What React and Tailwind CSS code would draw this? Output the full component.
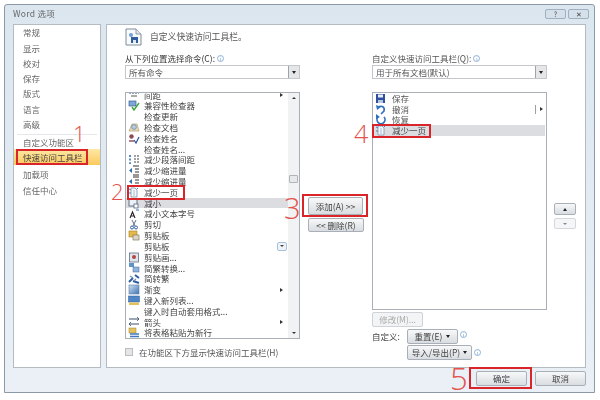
import React from "react";

// small hand drawn toolbar icons
function Doc() {
  return (
    <svg viewBox="0 0 12 11" className="w-3 h-[11px]">
      <path d="M3 1h4l2 2v7H3z" fill="#f4f8fc" stroke="#7f93a8" strokeWidth="0.8" />
      <path d="M1 2l2 1M1 6h2M10 1l-1 1" stroke="#3f86c4" strokeWidth="1" />
      <path d="M5 4h2M5 6h2M5 8h2" stroke="#8aa5bf" strokeWidth="0.7" />
    </svg>
  );
}

const icons = {
  spacing: (
    <svg viewBox="0 0 12 11" className="w-3 h-[11px]">
      <path d="M1 1h3M7 1h4M1 4h10" stroke="#2d4f7c" strokeWidth="1.2" strokeDasharray="2 1" />
      <path d="M3 7h6" stroke="#555" strokeWidth="1" />
    </svg>
  ),
  compat: (
    <svg viewBox="0 0 12 11" className="w-3 h-[11px]">
      <rect x="1" y="1" width="7" height="5" fill="#7da7d9" stroke="#3c5f95" strokeWidth="0.7" />
      <path d="M4 7l2 3 5-7" fill="none" stroke="#3da33d" strokeWidth="1.4" />
    </svg>
  ),
  inspect: (
    <svg viewBox="0 0 12 11" className="w-3 h-[11px]">
      <path d="M1 9l3-7h5l2 7z" fill="#e8dcb8" stroke="#b0a070" strokeWidth="0.7" />
      <circle cx="6" cy="5" r="2.4" fill="#b9cbe4" stroke="#6580a6" strokeWidth="0.7" />
    </svg>
  ),
  name: (
    <svg viewBox="0 0 12 11" className="w-3 h-[11px]">
      <circle cx="3.5" cy="3.5" r="2.2" fill="#8f4a58" />
      <path d="M1 8h5" stroke="#8f4a58" strokeWidth="1.4" />
      <path d="M6 7l2 3 3-6" fill="none" stroke="#2f4f9f" strokeWidth="1.2" />
    </svg>
  ),
  para: (
    <svg viewBox="0 0 12 11" className="w-3 h-[11px]">
      <path d="M2 1v9" stroke="#2f6fb5" strokeWidth="1.6" strokeDasharray="2 1.6" />
      <path d="M6 2h5M6 5h5M6 8h5" stroke="#444" strokeWidth="1.2" strokeDasharray="2 1" />
    </svg>
  ),
  indent: (
    <svg viewBox="0 0 12 11" className="w-3 h-[11px]">
      <path d="M5 1h6M7 4h4M7 7h4M5 10h6" stroke="#333" strokeWidth="1.1" />
      <path d="M4 3L1 5.5 4 8z" fill="#2f6fb5" />
    </svg>
  ),
  shrink: (
    <svg viewBox="0 0 12 11" className="w-3 h-[11px]">
      <rect x="1" y="1" width="8" height="7" fill="#eef2f7" stroke="#56677d" strokeWidth="0.9" />
      <rect x="6" y="6" width="4" height="4" fill="#fff" stroke="#56677d" strokeWidth="0.8" />
    </svg>
  ),
  font: (
    <svg viewBox="0 0 12 11" className="w-3 h-[11px]">
      <path d="M2 10l2.5-6L7 10M3 8h3" fill="none" stroke="#222" strokeWidth="1.1" />
      <path d="M8 2h3" stroke="#2f6fb5" strokeWidth="1" />
    </svg>
  ),
  cut: (
    <svg viewBox="0 0 12 11" className="w-3 h-[11px]">
      <path d="M4 1l3 6M8 1L5 7" stroke="#5f6f86" strokeWidth="1" />
      <circle cx="4" cy="8.5" r="1.5" fill="none" stroke="#2f5f9f" strokeWidth="1" />
      <circle cx="8" cy="8.5" r="1.5" fill="none" stroke="#2f5f9f" strokeWidth="1" />
    </svg>
  ),
  clip: (
    <svg viewBox="0 0 12 11" className="w-3 h-[11px]">
      <rect x="1" y="1" width="8" height="6" fill="#e6b94a" stroke="#a57f24" strokeWidth="0.6" />
      <rect x="5" y="5" width="6" height="5" fill="#d9d6cc" stroke="#7f6a4a" strokeWidth="0.6" />
    </svg>
  ),
  clipart: (
    <svg viewBox="0 0 12 11" className="w-3 h-[11px]">
      <rect x="1.5" y="1" width="9" height="9" fill="#dfe5ec" stroke="#5f6f86" strokeWidth="0.8" />
      <circle cx="6" cy="5" r="2" fill="#b6473e" />
    </svg>
  ),
  convert: (
    <svg viewBox="0 0 12 11" className="w-3 h-[11px]">
      <rect x="1" y="1" width="5" height="4" fill="#5f92c9" />
      <rect x="5" y="5" width="6" height="5" fill="#8fb3da" stroke="#3f6a9f" strokeWidth="0.5" />
    </svg>
  ),
  convert2: (
    <svg viewBox="0 0 12 11" className="w-3 h-[11px]">
      <path d="M1 9l4-4M7 2l4 3M5 8l6 2" stroke="#2f5f9f" strokeWidth="2" />
      <path d="M2 3l3 2M8 6l-2 2" stroke="#6f8fb8" strokeWidth="1.2" />
    </svg>
  ),
  gradient: (
    <svg viewBox="0 0 12 11" className="w-3 h-[11px]">
      <defs>
        <linearGradient id="grad" x1="0" y1="0" x2="1" y2="1">
          <stop offset="0" stopColor="#cfe0f3" />
          <stop offset="1" stopColor="#3f73b3" />
        </linearGradient>
      </defs>
      <rect x="1" y="1" width="10" height="9" fill="url(#grad)" stroke="#5f7ea3" strokeWidth="0.6" />
    </svg>
  ),
  newlist: (
    <svg viewBox="0 0 12 11" className="w-3 h-[11px]">
      <rect x="0.5" y="1" width="11" height="6" fill="#4f86c6" stroke="#2f5f9f" strokeWidth="0.5" />
      <rect x="1" y="7.5" width="10" height="2.5" fill="#e2c15a" />
    </svg>
  ),
  arrows: (
    <svg viewBox="0 0 12 11" className="w-3 h-[11px]">
      <path d="M1 3h10M1 8h10" stroke="#3a4f6a" strokeWidth="1" />
      <path d="M9 1l2 2-2 2M3 6L1 8l2 2" fill="none" stroke="#3a4f6a" strokeWidth="0.8" />
    </svg>
  ),
  paste: (
    <svg viewBox="0 0 12 11" className="w-3 h-[11px]">
      <rect x="1" y="1" width="7" height="5" fill="#e3c25f" stroke="#a57f24" strokeWidth="0.5" />
      <path d="M2 7h9M2 9.5h9" stroke="#3f78bb" strokeWidth="1.4" />
    </svg>
  ),
};

const commands = [
  { name: "间距", icon: "spacing", arrow: true },
  { name: "兼容性检查器", icon: "compat" },
  { name: "检查更新" },
  { name: "检查文档", icon: "inspect" },
  { name: "检查姓名", icon: "name" },
  { name: "检查姓名..." },
  { name: "减少段落间距", icon: "para" },
  { name: "减少缩进量", icon: "indent" },
  { name: "减少缩进量", icon: "indent" },
  { name: "减少一页", doc: true },
  { name: "减小", icon: "shrink", selected: true },
  { name: "减小文本字号", icon: "font" },
  { name: "剪切", icon: "cut" },
  { name: "剪贴板", icon: "clip" },
  { name: "剪贴板", dropdown: true },
  { name: "剪贴画...", icon: "clipart" },
  { name: "简繁转换...", icon: "convert" },
  { name: "简转繁", icon: "convert2" },
  { name: "渐变", icon: "gradient", arrow: true },
  { name: "键入新列表...", icon: "newlist" },
  { name: "键入时自动套用格式..." },
  { name: "箭头", icon: "arrows", arrow: true },
  { name: "将表格粘贴为新行", icon: "paste" },
];

const navItems = ["常规", "显示", "校对", "保存", "版式", "语言", "高级"];

function Info() {
  return (
    <span className="inline-flex items-center justify-center w-[7px] h-[7px] rounded-full border border-[#8fb3da] text-[5px] leading-none text-[#5f92c9]">
      i
    </span>
  );
}

function Select({ label }) {
  return (
    <div className="flex items-center h-[14px] mt-px border border-[#c3c7cc] bg-white">
      <span className="flex-1 pl-[3px] text-[8.5px] text-[#555]">{label}</span>
      <span className="flex items-center justify-center w-[11px] h-full bg-[#e4e6e8] border-l border-[#9fa4aa]">
        <span className="w-0 h-0 border-x-[2.5px] border-x-transparent border-t-[3px] border-t-[#222]" />
      </span>
    </div>
  );
}

function Button({ className, children }) {
  return (
    <div
      className={`flex items-center justify-center rounded-[2px] border border-[#a9afb6] bg-gradient-to-b from-[#f7f8f9] to-[#d9dde1] text-[8.5px] text-[#444] ${className}`}
    >
      {children}
    </div>
  );
}

function Mark({ className, children }) {
  return (
    <span
      className={`absolute font-['Open_Sans',sans-serif] font-light leading-none text-[#e4524c] ${className}`}
    >
      {children}
    </span>
  );
}

function Box({ className }) {
  return <div className={`absolute border-2 border-[#d9252a] ${className}`} />;
}

export default function App() {
  return (
    <div className="relative w-[600px] h-[400px] overflow-hidden bg-white pl-1 pt-1 font-['Noto_Sans_CJK_SC','Noto_Sans',sans-serif]">
      <div className="flex flex-col w-[591px] h-[389px] rounded-t-[3px] border border-[#8c99a6] bg-gradient-to-b from-[#dbe6ef] to-[#eaf0f6] blur-[0.4px]">
        {/* title bar */}
        <div className="flex items-start h-[19px] pl-2 pr-[5px] shrink-0">
          <span className="mt-[2px] text-[8.5px] tracking-[0.3px] text-[#666]">Word 选项</span>
          <div className="flex gap-[2px] ml-auto mt-[4px]">
            <div className="flex items-center justify-center w-[21px] h-[10px] rounded-[2px] border border-[#9fb0c0] bg-[#d5e0ea] text-[7px] leading-none text-[#444]">
              ?
            </div>
            <div className="flex items-center justify-center w-[21px] h-[10px] rounded-[2px] border border-[#9fb0c0] bg-[#d5e0ea] text-[7px] leading-none text-[#444]">
              ✕
            </div>
          </div>
        </div>

        {/* panels */}
        <div className="flex gap-[5px] h-[344px] pl-2 pr-2 shrink-0">
          <div className="w-[88px] bg-white border border-[#b5bbc2] shrink-0">
            {navItems.map((item) => (
              <div key={item} className="flex items-center h-[15.3px] pl-[9px] text-[8.5px] text-[#666]">
                {item}
              </div>
            ))}
            <div className="mx-[3px] mt-[2px] border-t border-[#e5e7ea]" />
            <div className="flex items-center h-[14px] pl-[9px] text-[8.5px] text-[#666]">自定义功能区</div>
            <div className="flex items-center h-[16px] pl-[9px] bg-gradient-to-b from-[#fde9a4] to-[#fbc95a] text-[8.5px] text-[#444]">
              快速访问工具栏
            </div>
            <div className="flex items-center h-[15.3px] mt-[2px] pl-[9px] text-[8.5px] text-[#666]">加载项</div>
            <div className="flex items-center h-[15.3px] pl-[9px] text-[8.5px] text-[#666]">信任中心</div>
          </div>

          <div className="flex-1 pl-[18px] bg-white border border-[#b5bbc2]">
            <div className="flex items-center gap-[8px] h-[18px] mt-[3px]">
              <svg viewBox="0 0 17 18" className="w-[17px] h-[18px]">
                <path d="M1 1h10l5 5v11H1z" fill="#f8fafc" stroke="#7f8b98" strokeWidth="1" />
                <path d="M11 1v5h5" fill="#e1e6eb" stroke="#7f8b98" strokeWidth="0.8" />
                <circle cx="6" cy="7" r="2" fill="#6fa0d2" />
                <rect x="6" y="9" width="7" height="6" fill="#2f5e9a" />
                <rect x="8" y="12" width="3" height="3" fill="#dfe8f2" />
              </svg>
              <span className="text-[8.8px] text-[#555]">自定义快速访问工具栏。</span>
            </div>

            <div className="flex mt-[6px]">
              {/* commands column */}
              <div className="w-[175px] shrink-0">
                <div className="flex items-center gap-[2px] h-3 text-[8.5px] text-[#333]">
                  从下列位置选择命令(C):
                  <Info />
                </div>
                <Select label="所有命令" />
                <div className="relative flex h-[247px] mt-[13px] border border-[#a9afb6] bg-white overflow-hidden">
                  <div className="flex-1 -mt-[3.5px]">
                    {commands.map((cmd, i) => (
                      <div
                        key={i}
                        className={`relative flex items-center h-[10.82px] pl-[2px] text-[8.5px] text-[#444] ${
                          cmd.selected ? "bg-[#dcdde0]" : ""
                        }`}
                      >
                        <span className="flex items-center w-4 shrink-0">
                          {cmd.doc ? <Doc /> : cmd.icon ? icons[cmd.icon] : null}
                        </span>
                        {cmd.name}
                        {cmd.arrow && (
                          <span className="absolute right-[5px] w-0 h-0 border-y-[2.5px] border-y-transparent border-l-[3px] border-l-[#333]" />
                        )}
                        {cmd.dropdown && (
                          <span className="absolute right-[1px] flex items-center justify-center w-[10px] h-[9px] rounded-[2px] border border-[#a8c0da] bg-[#eef3f9]">
                            <span className="w-0 h-0 border-x-[2px] border-x-transparent border-t-[2px] border-t-[#444]" />
                          </span>
                        )}
                      </div>
                    ))}
                  </div>
                  <div className="flex flex-col items-center w-[11px] shrink-0 bg-[#f1f2f3]">
                    <span className="mt-[4px] w-0 h-0 border-x-[2px] border-x-transparent border-b-[2px] border-b-[#333]" />
                    <span className="mt-[76px] w-[9px] h-[8px] rounded-[1px] border border-[#b0b4b8] bg-[#e6e8ea]" />
                    <span className="mt-auto mb-[4px] w-0 h-0 border-x-[2px] border-x-transparent border-t-[2px] border-t-[#333]" />
                  </div>
                </div>
                <div className="flex items-center gap-[6px] mt-[7px] text-[8.5px] text-[#555]">
                  <span className="w-[8px] h-[8px] border border-[#b9bcc0] bg-[#e4e5e6]" />
                  在功能区下方显示快速访问工具栏(H)
                </div>
              </div>

              {/* add and remove */}
              <div className="flex flex-col w-[72px] pl-2 pt-[145px] shrink-0">
                <Button className="w-[55px] h-[18px]">添加(A) &gt;&gt;</Button>
                <Button className="w-[56px] h-[14px] mt-[3px]">&lt;&lt; 删除(R)</Button>
              </div>

              {/* toolbar column */}
              <div className="w-[175px] shrink-0">
                <div className="flex items-center gap-[2px] h-3 text-[8.5px] text-[#555]">
                  自定义快速访问工具栏(Q):
                  <Info />
                </div>
                <Select label="用于所有文档(默认)" />
                <div className="relative h-[218px] mt-[13px] border border-[#a9afb6] bg-white">
                  <div className="flex items-center h-[10.7px] pl-[2px] text-[8.5px] text-[#555]">
                    <span className="w-[17px] shrink-0">
                      <svg viewBox="0 0 12 11" className="w-3 h-[11px]">
                        <rect x="1" y="1" width="9" height="9" fill="#2f4f9f" />
                        <rect x="3" y="1.5" width="5" height="3" fill="#e8eef6" />
                        <rect x="3" y="7" width="5" height="3" fill="#b9c7dc" />
                      </svg>
                    </span>
                    保存
                  </div>
                  <div className="relative flex items-center h-[10.7px] pl-[2px] text-[8.5px] text-[#555]">
                    <span className="w-[17px] shrink-0">
                      <svg viewBox="0 0 12 11" className="w-3 h-[11px]">
                        <path d="M3 3c4-2 7 0 6 4l-3 3" fill="none" stroke="#2f6fc0" strokeWidth="1.6" />
                        <path d="M1 1l1 5 4-3z" fill="#2f6fc0" />
                      </svg>
                    </span>
                    撤消
                    <span className="absolute right-[10px] h-[9px] border-l border-[#9aa0a6]" />
                    <span className="absolute right-[3px] w-0 h-0 border-y-[2.5px] border-y-transparent border-l-[3px] border-l-[#333]" />
                  </div>
                  <div className="flex items-center h-[10.7px] pl-[2px] text-[8.5px] text-[#555]">
                    <span className="w-[17px] shrink-0">
                      <svg viewBox="0 0 12 11" className="w-3 h-[11px]">
                        <path d="M9 3A4 4 0 1 1 3 3" fill="none" stroke="#2f6fc0" strokeWidth="1.7" />
                        <path d="M1 0v5l4-2z" fill="#2f6fc0" />
                      </svg>
                    </span>
                    恢复
                  </div>
                  <div className="flex items-center h-[11px] mx-px pl-px bg-[#dcdde0] text-[8.5px] text-[#444]">
                    <span className="w-[17px] shrink-0">
                      <Doc />
                    </span>
                    减少一页
                  </div>
                </div>
                <Button className="w-[51px] h-[15px] mt-[2px] !bg-none !bg-[#f3f4f5] !border-[#cfd2d6] !text-[#aaa]">
                  修改(M)...
                </Button>
                <div className="flex items-center h-[14px] mt-[2px] text-[8.5px] text-[#444]">
                  <span className="w-[35px] shrink-0">自定义:</span>
                  <Button className="gap-[4px] w-[51px] h-[15px]">
                    重置(E)
                    <span className="w-0 h-0 border-x-[2.5px] border-x-transparent border-t-[3px] border-t-[#222]" />
                  </Button>
                  <span className="flex ml-[2px] mb-[4px]">
                    <Info />
                  </span>
                </div>
                <div className="flex items-center h-[15px] mt-[2px] pl-[35px]">
                  <Button className="gap-[3px] w-[65px] h-[15px]">
                    导入/导出(P)
                    <span className="w-0 h-0 border-x-[2.5px] border-x-transparent border-t-[3px] border-t-[#222]" />
                  </Button>
                  <span className="flex ml-[2px]">
                    <Info />
                  </span>
                </div>
              </div>

              {/* move up and down */}
              <div className="flex flex-col gap-[3px] ml-[7px] pt-[151px]">
                <Button className="w-[22px] h-[12px]">
                  <span className="w-0 h-0 border-x-[2.5px] border-x-transparent border-b-[3px] border-b-[#222]" />
                </Button>
                <Button className="w-[22px] h-[11px] !bg-none !bg-[#f5f6f7] !border-[#d5d8db]">
                  <span className="w-0 h-0 border-x-[2px] border-x-transparent border-t-[2px] border-t-[#888]" />
                </Button>
              </div>
            </div>
          </div>
        </div>

        {/* footer */}
        <div className="flex justify-end gap-2 pt-[3px] pr-2">
          <Button className="w-[51px] h-[15px]">确定</Button>
          <Button className="w-[51px] h-[15px]">取消</Button>
        </div>
      </div>

      {/* red annotations */}
      <Box className="left-[16px] top-[149px] w-[72px] h-[16px]" />
      <Box className="left-[127px] top-[185px] w-[58px] h-[15px]" />
      <Box className="left-[302px] top-[194px] w-[66px] h-[23px]" />
      <Box className="left-[372px] top-[124px] w-[59px] h-[14px]" />
      <Box className="left-[469px] top-[367px] w-[63px] h-[22px]" />
      <Mark className="left-[73px] top-[122px] text-[22px]">1</Mark>
      <Mark className="left-[111px] top-[180px] text-[22px]">2</Mark>
      <Mark className="left-[284px] top-[193px] text-[29px]">3</Mark>
      <Mark className="left-[354px] top-[121px] text-[25px]">4</Mark>
      <Mark className="left-[450px] top-[363px] text-[31px]">5</Mark>
    </div>
  );
}
